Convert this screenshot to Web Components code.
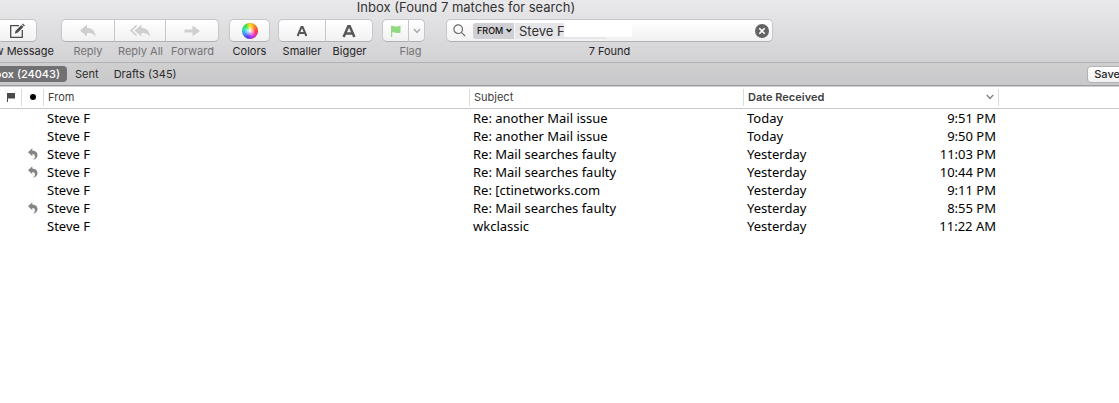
<!DOCTYPE html>
<html lang="en">
<head>
    <meta charset="UTF-8">
    <meta name="viewport" content="width=device-width, initial-scale=1.0">
    <title>Inbox</title>
    <style>
        body {
            margin: 0;
            background: #fff;
            color: #262626;
            font: 11px/14px Inter, "Liberation Sans", sans-serif;
            overflow: hidden;
        }
    </style>
</head>
<body>

<mail-window>
    <mail-toolbar slot="toolbar" heading="Inbox (Found 7 matches for search)">
        <tool-group class="compose">
            <tool-button label="New Message" size="40">
                <svg width="16" height="16" viewBox="0 0 16 16" fill="none" stroke="#4c4c4c" stroke-width="1.3"><path d="M10 2.700H1.700v11.600h11.600V7"/><path d="M5.800 10.700l.8-2.900 5.800-5.800 2 2-5.800 5.800z" fill="#4c4c4c" stroke="none"/><path d="M13 1.400l2 2 .9-.9-2-2z" fill="#4c4c4c" stroke="none"/></svg>
            </tool-button>
        </tool-group>
        <tool-group class="answer">
            <tool-button label="Reply" size="54" disabled>
                <svg width="18" height="14" viewBox="0 0 18 14" fill="#cfcfcf"><path d="M1 6.500L8 .6v3.200C13 4 16.300 7 16.600 13 14.800 9.600 12.300 8.900 8 8.900v3.500z"/></svg>
            </tool-button>
            <tool-button label="Reply All" size="51" disabled>
                <svg width="22" height="14" viewBox="0 0 22 14" fill="#cfcfcf"><path d="M5.500 6.500l7-5.900v3.200c5 .2 8.200 3.200 8.500 9.200-1.800-3.400-4.200-4.100-8.500-4.100v3.500z"/><path d="M7.500.6v2.200L3.200 6.500l4.300 3.700v2.200L.6 6.500z"/></svg>
            </tool-button>
            <tool-button label="Forward" size="53" disabled>
                <svg width="18" height="14" viewBox="0 0 18 14" fill="#cfcfcf"><path d="M1.500 5.500h8V1.500L17 7l-7.500 5.500V8.500h-8z"/></svg>
            </tool-button>
        </tool-group>
        <tool-group>
            <tool-button label="Colors" size="41"><color-wheel></color-wheel></tool-button>
        </tool-group>
        <tool-group>
            <tool-button label="Smaller" size="48">
                <svg width="12" height="12" viewBox="0 0 12 12" fill="none" stroke="#575757" stroke-width="2"><path d="M1.600 11L5.400 2h1.200l3.800 9M3 8h6"/></svg>
            </tool-button>
            <tool-button label="Bigger" size="47">
                <svg width="14" height="14" viewBox="0 0 14 14" fill="none" stroke="#575757" stroke-width="2.500"><path d="M1.600 13L6.300 2.200h1.400L12.400 13M3.500 9.400h7"/></svg>
            </tool-button>
        </tool-group>
        <tool-group class="flagging" caption="Flag">
            <tool-button hint="Flag" size="27" disabled>
                <svg width="12" height="14" viewBox="0 0 12 14" fill="#92da82"><path d="M1 2c2-1 3.400.6 5 .6S9 2 10.500 1.500v7C9 9.200 7.600 9.200 6 8.800S3.500 8 2.200 8.600V13H1z"/></svg>
            </tool-button>
            <tool-button hint="Flag colors" size="16" disabled>
                <svg width="8" height="6" viewBox="0 0 8 6" fill="none" stroke="#a9a9a9" stroke-width="1.500"><path d="M1 1l3 3.400L7 1"/></svg>
            </tool-button>
        </tool-group>
        <search-field term="Steve F" status="7 Found"></search-field>
    </mail-toolbar>

    <favorites-bar slot="favorites">
        <a href="#inbox" class="current">Inbox (24043)</a>
        <a href="#sent">Sent</a>
        <a href="#drafts">Drafts (345)</a>
        <button slot="action" type="button">Save</button>
    </favorites-bar>

    <message-list></message-list>
</mail-window>

<script>
function attach(element, markup) {
    const root = element.attachShadow({ mode: 'open' });
    root.innerHTML = markup;
    return root;
}

class MailWindow extends HTMLElement {
    constructor() {
        super();
        attach(this, `
            <style>
                :host {
                    display: flex;
                    flex-direction: column;
                    min-height: 100vh;
                }
            </style>
            <slot name="toolbar"></slot>
            <slot name="favorites"></slot>
            <slot></slot>
        `);
    }
}

class MailToolbar extends HTMLElement {
    connectedCallback() {
        attach(this, `
            <style>
                :host {
                    display: block;
                    background: linear-gradient(#e9e8ea, #d2d1d3);
                    border-bottom: 1px solid #b2b1b3;
                }
                h1 {
                    margin: 0;
                    padding-right: 187px;
                    font-size: 13px;
                    line-height: 14px;
                    font-weight: 400;
                    text-align: center;
                    color: #333;
                }
                .tools {
                    display: flex;
                    align-items: flex-start;
                    gap: 8px;
                    padding: 5px 0 4px;
                }
                ::slotted(.compose) {
                    margin-left: -3px;
                }
                ::slotted(.answer) {
                    margin: 0 2px 0 16px;
                }
                ::slotted(.flagging) {
                    margin: 0 13px 0 1px;
                }
            </style>
            <h1>${this.getAttribute('heading')}</h1>
            <div class="tools"><slot></slot></div>
        `);
    }
}

class ToolGroup extends HTMLElement {
    connectedCallback() {
        const caption = this.getAttribute('caption');
        attach(this, `
            <style>
                :host {
                    display: block;
                    flex: none;
                }
                .buttons {
                    display: flex;
                }
                .caption {
                    padding-left: 14px;
                    margin-top: 2px;
                    text-align: center;
                    color: #747376;
                }
                ::slotted(tool-button:first-child) {
                    --left: 5px;
                    --edge: 1px;
                }
                ::slotted(tool-button:last-child) {
                    --right: 5px;
                }
            </style>
            <div class="buttons"><slot></slot></div>
            ${caption ? `<div class="caption">${caption}</div>` : ''}
        `);
    }
}

class ToolButton extends HTMLElement {
    connectedCallback() {
        const label = this.getAttribute('label');
        const disabled = this.hasAttribute('disabled') ? 'disabled' : '';
        const hint = this.getAttribute('hint');
        attach(this, `
            <style>
                :host {
                    display: block;
                    width: ${this.getAttribute('size')}px;
                }
                button {
                    display: flex;
                    flex-direction: column;
                    align-items: center;
                    gap: 2px;
                    width: 100%;
                    padding: 0;
                    border: 0;
                    background: none;
                    font: inherit;
                    color: #262626;
                }
                button:disabled {
                    color: #747376;
                }
                .face {
                    display: flex;
                    align-items: center;
                    justify-content: center;
                    box-sizing: border-box;
                    width: 100%;
                    height: 23px;
                    border: 1px solid #c6c5c7;
                    border-left-width: var(--edge, 0);
                    border-bottom-color: #b0afb1;
                    border-radius: var(--left, 0) var(--right, 0) var(--right, 0) var(--left, 0);
                    background: linear-gradient(#fff, #f1f1f1);
                }
                .label {
                    white-space: nowrap;
                }
            </style>
            <button type="button" ${disabled} ${hint ? `aria-label="${hint}"` : ''}>
                <span class="face"><slot></slot></span>
                ${label ? `<span class="label">${label}</span>` : ''}
            </button>
        `);
    }
}

class ColorWheel extends HTMLElement {
    constructor() {
        super();
        attach(this, `
            <style>
                :host {
                    display: block;
                    width: 16px;
                    height: 16px;
                    border-radius: 50%;
                    background:
                        radial-gradient(#fff 0, #fff0 50%, #0000 60%, #0003 72%),
                        conic-gradient(#ffe11a, #ff8b1e, #ff3b3b 90deg, #f531b0, #b03cf5, #5a3cf5 200deg, #3aa0ff 250deg, #30e5c0, #3ae53f 320deg, #ffe11a);
                }
            </style>
        `);
    }
}

class SearchField extends HTMLElement {
    connectedCallback() {
        const root = attach(this, `
            <style>
                :host {
                    display: block;
                    width: 327px;
                }
                .field {
                    display: flex;
                    align-items: center;
                    box-sizing: border-box;
                    height: 23px;
                    padding: 0 3px 0 6px;
                    border: 1px solid #c6c5c7;
                    border-bottom-color: #b0afb1;
                    border-radius: 5px;
                    background: linear-gradient(#fff, #f1f1f1);
                }
                .scope {
                    display: flex;
                    align-items: center;
                    width: 41px;
                    height: 16px;
                    margin: 0 1px 0 7px;
                    border-radius: 3px 0 0 3px;
                    background: #d0cfd4;
                }
                select {
                    appearance: none;
                    width: 33px;
                    padding: 0 0 0 4px;
                    border: 0;
                    background: none;
                    font: 500 9px/16px Inter, "Liberation Sans", sans-serif;
                    color: #111;
                }
                .term {
                    position: relative;
                    width: 92px;
                    height: 16px;
                }
                .term::after {
                    content: "";
                    position: absolute;
                    left: 49px;
                    top: 0;
                    width: 68px;
                    height: 14px;
                    background: #fff;
                }
                input {
                    display: block;
                    box-sizing: border-box;
                    width: 100%;
                    height: 16px;
                    padding: 0 4px;
                    border: 0;
                    border-radius: 0 3px 3px 0;
                    background: #e6e5ea;
                    font: 13px/16px Inter, "Liberation Sans", sans-serif;
                    color: #333;
                }
                .clear {
                    display: flex;
                    margin-left: auto;
                    padding: 0;
                    border: 0;
                    background: none;
                }
                output {
                    display: block;
                    margin-top: 2px;
                    text-align: center;
                }
            </style>
            <div class="field">
                <svg width="13" height="13" viewBox="0 0 13 13" fill="none" stroke="#6a6a6a" stroke-width="1.200"><circle cx="5.200" cy="5.200" r="4.300"/><path d="M8.400 8.400l3.800 3.800"/></svg>
                <span class="scope">
                    <select aria-label="Search in"><option>FROM</option></select>
                    <svg width="6" height="5" viewBox="0 0 6 5" fill="none" stroke="#111" stroke-width="1.500"><path d="M.6 1L3 3.500 5.400 1"/></svg>
                </span>
                <span class="term"><input type="text" aria-label="Search"></span>
                <button class="clear" type="button" aria-label="Clear search">
                    <svg width="14" height="14" viewBox="0 0 14 14"><circle cx="7" cy="7" r="7" fill="#646464"/><path d="M4.300 4.300l5.400 5.400M9.700 4.300L4.300 9.700" stroke="#fff" stroke-width="1.600"/></svg>
                </button>
            </div>
            <output>${this.getAttribute('status')}</output>
        `);
        const input = root.querySelector('input');
        input.value = this.getAttribute('term');
        root.querySelector('.clear').addEventListener('click', () => {
            input.value = '';
            input.focus();
        });
    }
}

class FavoritesBar extends HTMLElement {
    constructor() {
        super();
        attach(this, `
            <style>
                :host {
                    display: flex;
                    align-items: center;
                    height: 22px;
                    background: linear-gradient(#d0cfd0, #c9c8ca);
                    border-bottom: 1px solid #9b9a9c;
                    box-shadow: 0 1px #d0d0d0;
                }
                nav {
                    display: flex;
                    gap: 1px;
                    margin-left: -22px;
                }
                ::slotted(a) {
                    padding: 1px 7px;
                    border-radius: 4px;
                    color: #2c2c2c;
                    text-decoration: none;
                    white-space: nowrap;
                }
                ::slotted(a.current) {
                    background: #717073;
                    color: #fff;
                    font-weight: 500;
                }
                ::slotted(button) {
                    height: 17px;
                    margin: 0 -8px 0 auto;
                    padding: 0 6px;
                    border: 1px solid #b2b1b3;
                    border-radius: 4px;
                    background: linear-gradient(#fff, #f1f1f1);
                    color: #262626;
                    font: 500 11px/14px Inter, "Liberation Sans", sans-serif;
                }
            </style>
            <nav><slot></slot></nav>
            <slot name="action"></slot>
        `);
    }
}

const messages = [
    { from: 'Steve F', subject: 'Re: another Mail issue', day: 'Today', time: '9:51 PM' },
    { from: 'Steve F', subject: 'Re: another Mail issue', day: 'Today', time: '9:50 PM' },
    { from: 'Steve F', subject: 'Re: Mail searches faulty', day: 'Yesterday', time: '11:03 PM', replied: true },
    { from: 'Steve F', subject: 'Re: Mail searches faulty', day: 'Yesterday', time: '10:44 PM', replied: true },
    { from: 'Steve F', subject: 'Re: [ctinetworks.com', day: 'Yesterday', time: '9:11 PM' },
    { from: 'Steve F', subject: 'Re: Mail searches faulty', day: 'Yesterday', time: '8:55 PM', replied: true },
    { from: 'Steve F', subject: 'wkclassic', day: 'Yesterday', time: '11:22 AM' }
];

const repliedIcon = '<svg width="10" height="12" viewBox="0 0 10 12" fill="#858585" role="img" aria-label="Replied"><path d="M0 4.200L4.300.2v2.300C8 2.700 9.700 4.900 9.500 7.600 9.300 9.900 7.700 11.300 4.600 11.800 6.400 10.500 7.100 9.200 6.900 7.900 6.700 6.600 5.900 6 4.300 5.900v2.400z"/></svg>';

class MessageList extends HTMLElement {
    constructor() {
        super();
        this.root = attach(this, `
            <style>
                :host {
                    display: block;
                    flex: 1;
                    padding-top: 1px;
                    color: #000;
                }
                table {
                    width: 100%;
                    table-layout: fixed;
                    border-collapse: separate;
                    border-spacing: 0;
                }
                .mark { width: 22px; }
                .from { width: 426px; }
                .subject { width: 274px; }
                .date { width: 255px; }
                th {
                    padding: 2px 0;
                    border-bottom: 1px solid #c8c8c8;
                    font-weight: 400;
                    text-align: left;
                    color: #404040;
                }
                .head {
                    display: flex;
                    align-items: center;
                    justify-content: space-between;
                    box-sizing: border-box;
                    height: 17px;
                    padding: 0 4px 2px;
                    border-right: 1px solid #dcdcdc;
                }
                .head.icon {
                    justify-content: center;
                    padding: 0 0 1px;
                }
                .sorted {
                    font-weight: 600;
                }
                td {
                    height: 18px;
                    padding: 0 3px;
                    font: 13px/18px "Noto Sans", "Liberation Sans", sans-serif;
                    white-space: nowrap;
                }
                td svg {
                    display: block;
                    margin: 0 auto;
                }
                .received {
                    display: flex;
                    justify-content: space-between;
                }
            </style>
            <table>
                <colgroup>
                    <col class="mark"><col class="mark"><col class="from"><col class="subject"><col class="date"><col>
                </colgroup>
                <thead>
                    <tr>
                        <th aria-label="Flagged"><div class="head icon"><svg width="8" height="9" viewBox="0 0 8 9" fill="#4a4a4a"><path d="M0 0h8v5.500H1V9H0z"/></svg></div></th>
                        <th aria-label="Unread"><div class="head icon"><svg width="6" height="6" viewBox="0 0 6 6"><circle cx="3" cy="3" r="3"/></svg></div></th>
                        <th><div class="head">From</div></th>
                        <th><div class="head">Subject</div></th>
                        <th aria-sort="descending"><div class="head sorted">Date Received <svg width="8" height="6" viewBox="0 0 8 6" fill="none" stroke="#808080" stroke-width="1.300"><path d="M.8 1L4 4.500 7.200 1"/></svg></div></th>
                        <th></th>
                    </tr>
                </thead>
                <tbody></tbody>
            </table>
        `);
    }

    connectedCallback() {
        this.root.querySelector('tbody').innerHTML = messages.map(message => `
            <tr>
                <td></td>
                <td>${message.replied ? repliedIcon : ''}</td>
                <td>${message.from}</td>
                <td>${message.subject}</td>
                <td><div class="received"><span>${message.day}</span><span>${message.time}</span></div></td>
                <td></td>
            </tr>
        `).join('');
    }
}

customElements.define('mail-window', MailWindow);
customElements.define('mail-toolbar', MailToolbar);
customElements.define('tool-group', ToolGroup);
customElements.define('tool-button', ToolButton);
customElements.define('color-wheel', ColorWheel);
customElements.define('search-field', SearchField);
customElements.define('favorites-bar', FavoritesBar);
customElements.define('message-list', MessageList);
</script>

</body>
</html>
